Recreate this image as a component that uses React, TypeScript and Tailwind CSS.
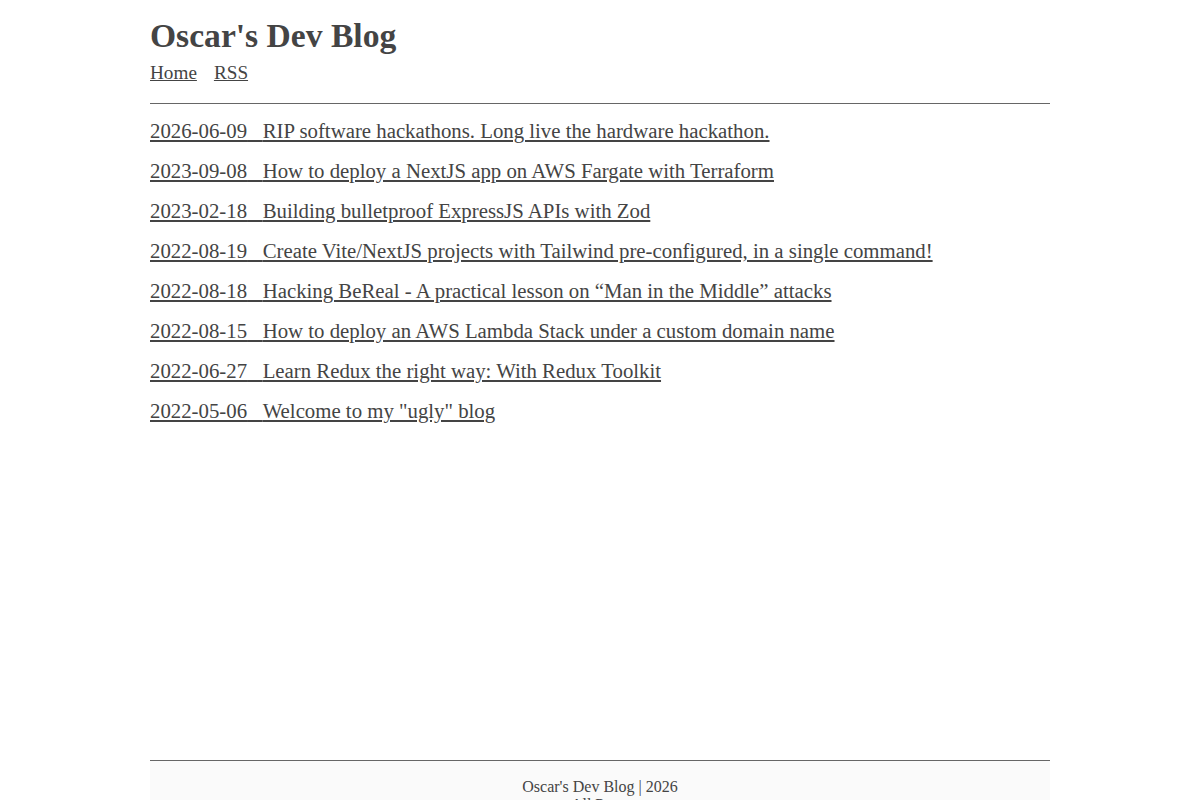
const posts = [
  { date: "2026-06-09", title: "RIP software hackathons. Long live the hardware hackathon." },
  { date: "2023-09-08", title: "How to deploy a NextJS app on AWS Fargate with Terraform" },
  { date: "2023-02-18", title: "Building bulletproof ExpressJS APIs with Zod" },
  { date: "2022-08-19", title: "Create Vite/NextJS projects with Tailwind pre-configured, in a single command!" },
  { date: "2022-08-18", title: "Hacking BeReal - A practical lesson on \u201cMan in the Middle\u201d attacks" },
  { date: "2022-08-15", title: "How to deploy an AWS Lambda Stack under a custom domain name" },
  { date: "2022-06-27", title: "Learn Redux the right way: With Redux Toolkit" },
  { date: "2022-05-06", title: "Welcome to my \"ugly\" blog" },
];

export default function App() {
  return (
    <div className="min-h-screen bg-white text-[#444] font-['Liberation_Serif','Times_New_Roman',serif]">
      <div className="mx-auto w-[900px]">
        <header className="pt-[16px]">
          <h1 className="text-[33.6px] font-bold leading-[39px]">Oscar's Dev Blog</h1>
          <nav className="mt-[7px] flex gap-[17px] text-[19.2px] leading-[22px]">
            <a href="#" className="underline">Home</a>
            <a href="#" className="underline">RSS</a>
          </nav>
        </header>
        <hr className="mt-[19px] border-t border-[#666]" />
        <main className="h-[656px] pt-[15px]">
          <ul className="flex flex-col gap-[16px] text-[20.8px] leading-[24px]">
            {posts.map((p) => (
              <li key={p.date}>
                <a href="#" className="underline">
                  {p.date}
                  {"\u00a0\u00a0\u00a0"}
                  {p.title}
                </a>
              </li>
            ))}
          </ul>
        </main>
        <hr className="border-t border-[#666]" />
        <footer className="bg-[#fafafa] pt-[17px] pb-4 text-center text-[16px] leading-[18px]">
          <p>Oscar's Dev Blog | 2026</p>
          <p>
            <a href="#">All Posts</a>
          </p>
        </footer>
      </div>
    </div>
  );
}
